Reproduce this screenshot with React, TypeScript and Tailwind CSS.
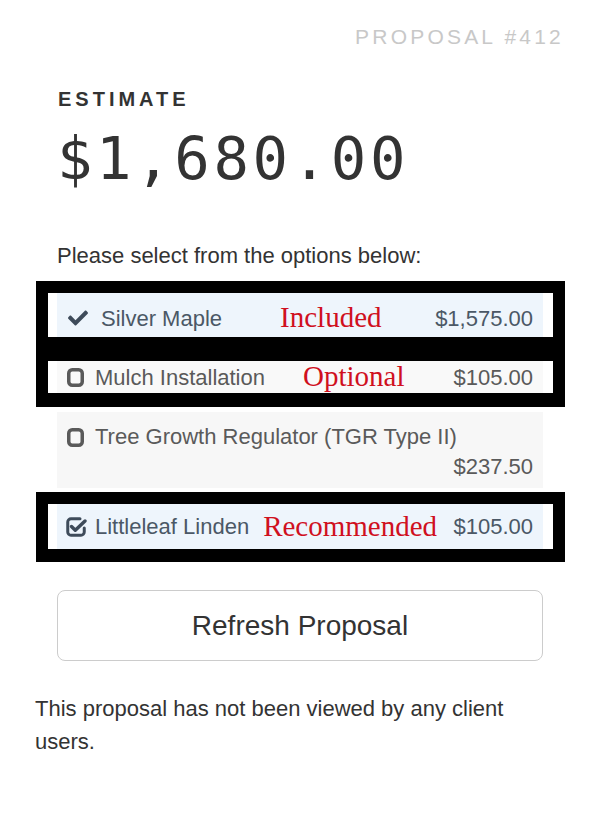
import { FaCheck } from 'react-icons/fa';

function SquareIcon() {
  return (
    <svg width="17" height="19" viewBox="0 0 17 19" className="shrink-0">
      <rect x="1.75" y="1.75" width="13.5" height="15.5" rx="3.5" fill="none" stroke="currentColor" strokeWidth="3.5" />
    </svg>
  );
}

function CheckSquareIcon() {
  return (
    <svg width="21" height="20" viewBox="0 0 21 20" className="shrink-0">
      <path d="M14 1.75H5a3.25 3.25 0 0 0-3.25 3.25v10A3.25 3.25 0 0 0 5 18.25h10a3.25 3.25 0 0 0 3.25-3.25V11" fill="none" stroke="currentColor" strokeWidth="3" strokeLinecap="round" />
      <path d="M5.5 9.5l3.8 3.8L19 4" fill="none" stroke="currentColor" strokeWidth="3.4" strokeLinecap="round" strokeLinejoin="round" />
    </svg>
  );
}

const sans = 'font-["Liberation_Sans",Arial,sans-serif]';
const serif = 'font-["Liberation_Serif","Times_New_Roman",serif]';

export default function App() {
  return (
    <div className={`w-[600px] h-[813px] bg-white overflow-hidden ${sans}`}>
      <div className="pt-[25px] pr-[36px] text-right text-[21px] leading-[24px] tracking-[3.2px] text-[#c8c8c8]">
        PROPOSAL #412
      </div>

      <div className="px-[57px]">
        <div className="mt-[38px] text-[20px] leading-[24px] font-bold tracking-[4px] text-[#333] pl-[1px]">ESTIMATE</div>
        <div className='mt-[12px] font-["DejaVu_Sans_Mono",monospace] text-[59px] leading-[72px] tracking-[3.6px] text-[#333]'>
          $1,680.00
        </div>

        <div className="mt-[47px] text-[22px] leading-[28px] text-[#333]">Please select from the options below:</div>

        {/* highlighted block: included + optional */}
        <div className="mt-[11px] -ml-[21px] -mr-[22px] border-[12px] border-b-[14px] border-black bg-white pl-[9px] pr-[10px]">
          <div className="h-[44px] pt-[6px] flex items-center bg-[#eef5fc] pl-[9px] pr-[10px] text-[22px] text-[#4b5866]">
            <FaCheck className="w-[24px] h-[20px] text-[#3e4b5a] shrink-0" />
            <span className="ml-[11px]">Silver Maple</span>
            <span className={`${serif} ml-[58px] text-[29px] text-[#d0101e]`}>Included</span>
            <span className="ml-auto">$1,575.00</span>
          </div>
          <div className="h-[24px] bg-black -ml-[9px] -mr-[10px]" />
          <div className="h-[32px] flex items-center bg-[#f9f9f9] pl-[10px] pr-[10px] text-[22px] text-[#5a5a5a]">
            <SquareIcon />
            <span className="ml-[11px]">Mulch Installation</span>
            <span className={`${serif} ml-[38px] text-[29px] text-[#d0101e]`}>Optional</span>
            <span className="ml-auto">$105.00</span>
          </div>
        </div>

        <div className="mt-[5px] bg-[#f7f7f7] pt-[10px] pb-[6px] pl-[10px] pr-[10px] text-[22px] leading-[30px] text-[#5a5a5a]">
          <div className="flex items-center">
            <SquareIcon />
            <span className="ml-[11px]">Tree Growth Regulator (TGR Type II)</span>
          </div>
          <div className="text-right">$237.50</div>
        </div>

        {/* highlighted block: recommended */}
        <div className="mt-[4px] -ml-[21px] -mr-[22px] border-[12px] border-b-[13px] border-black bg-white pl-[9px] pr-[10px]">
          <div className="h-[45px] flex items-center bg-[#eef5fc] pl-[9px] pr-[10px] text-[22px] text-[#4b5866]">
            <span className="text-[#3e4b5a] flex"><CheckSquareIcon /></span>
            <span className="ml-[8px]">Littleleaf Linden</span>
            <span className={`${serif} ml-[14px] text-[29px] text-[#d0101e]`}>Recommended</span>
            <span className="ml-auto">$105.00</span>
          </div>
        </div>

        <button className="mt-[28px] w-full h-[71px] border border-[#cccccc] rounded-[8px] bg-white text-[28px] text-[#333]">
          Refresh Proposal
        </button>

        <p className="mt-[31px] -ml-[22px] -mr-[22px] text-[22px] leading-[33px] text-[#333]">
          This proposal has not been viewed by any client users.
        </p>
      </div>
    </div>
  );
}
